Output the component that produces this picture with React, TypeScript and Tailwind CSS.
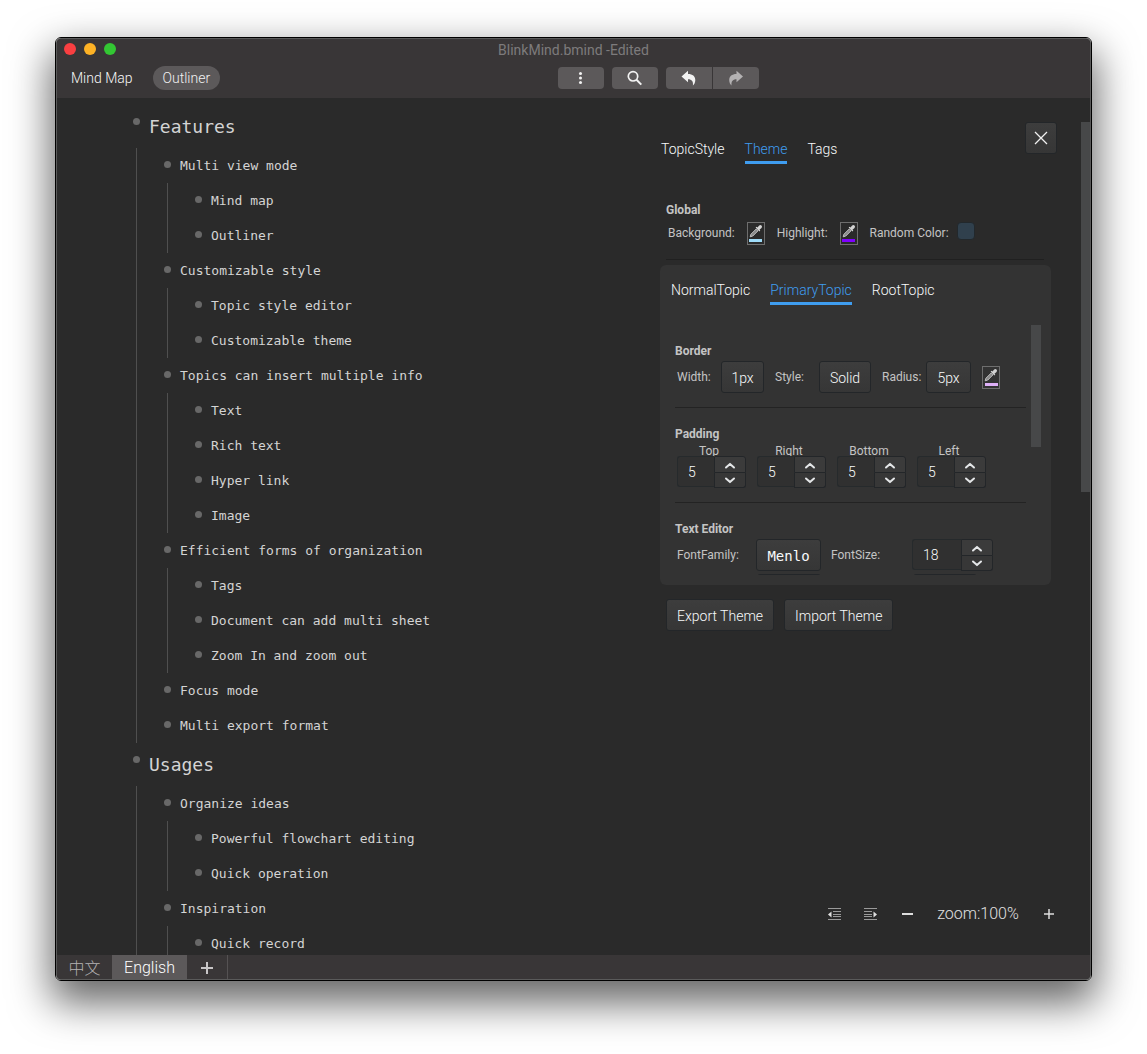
import { useId, type ReactNode } from "react";

type Topic = { text: string; children?: Topic[] };

const topics: Topic[] = [
  {
    text: "Features",
    children: [
      { text: "Multi view mode", children: [{ text: "Mind map" }, { text: "Outliner" }] },
      { text: "Customizable style", children: [{ text: "Topic style editor" }, { text: "Customizable theme" }] },
      {
        text: "Topics can insert multiple info",
        children: [{ text: "Text" }, { text: "Rich text" }, { text: "Hyper link" }, { text: "Image" }],
      },
      {
        text: "Efficient forms of organization",
        children: [{ text: "Tags" }, { text: "Document can add multi sheet" }, { text: "Zoom In and zoom out" }],
      },
      { text: "Focus mode" },
      { text: "Multi export format" },
    ],
  },
  {
    text: "Usages",
    children: [
      { text: "Organize ideas", children: [{ text: "Powerful flowchart editing" }, { text: "Quick operation" }] },
      { text: "Inspiration", children: [{ text: "Quick record" }] },
    ],
  },
];

function TopicList({ items, root = false }: { items: Topic[]; root?: boolean }) {
  return (
    <ul className={root ? "" : "ml-[3px] border-l border-[#4f4f4f] pl-[27px]"}>
      {items.map((t) => (
        <li key={t.text}>
          <div className={root ? "flex h-[43px] items-center gap-[9px] text-lg" : "flex h-[35px] items-center gap-[9px] text-[13px]"}>
            <span className={root ? "mb-2.5 size-[7px] shrink-0 rounded-full bg-[#686868]" : "mb-0.5 size-[7px] shrink-0 rounded-full bg-[#686868]"} />
            <span className="whitespace-nowrap">{t.text}</span>
          </div>
          {t.children && <TopicList items={t.children} />}
        </li>
      ))}
    </ul>
  );
}

function Tabs({ items, active }: { items: string[]; active: string }) {
  return (
    <div role="tablist" className="flex gap-5 text-sm font-light">
      {items.map((t) => (
        <button
          key={t}
          role="tab"
          aria-selected={t === active}
          className={
            t === active
              ? "h-[30px] border-b-3 border-[#3f9df0] pt-0.5 text-[#3f9df0]"
              : "h-[30px] border-b-3 border-transparent pt-0.5 text-[#f8fafb]"
          }
        >
          {t}
        </button>
      ))}
    </div>
  );
}

function ColorButton({ label, swatch }: { label: string; swatch: string }) {
  return (
    <button aria-label={label} className="flex h-[23px] w-[18px] shrink-0 flex-col items-center justify-between border border-[#6e6e6e] pt-px pb-0.5">
      <svg width="14" height="14" viewBox="0 0 14 14" fill="none">
        <path d="M1.2 12.8 2 10.2 7.2 5l1.8 1.8-5.2 5.2z" fill="#8a8a8a" stroke="#c0c0c0" strokeWidth="1" />
        <path d="M6.6 3.6 7.5 2.8l.9.8 1.8-2a1.6 1.6 0 0 1 2.3 2.3l-2 1.8.8.9-.9.9z" fill="#d4d4d4" />
      </svg>
      <span className={`h-[3px] w-[13px] ${swatch}`} />
    </button>
  );
}

const raised =
  "rounded-[3px] border border-[#232629] bg-linear-to-b from-[#3d3d3d] to-[#363636] text-[#f8fafb]";

function Picker({ label, value, size, mono = false }: { label: string; value: string; size: string; mono?: boolean }) {
  return (
    <select
      aria-label={label}
      defaultValue={value}
      className={`h-8 appearance-none pt-0.5 text-center [text-align-last:center] text-sm font-light ${raised} ${size} ${mono ? "font-['DejaVu_Sans_Mono',monospace]" : ""}`}
    >
      <option>{value}</option>
    </select>
  );
}

function Chevron({ up = false }: { up?: boolean }) {
  return (
    <svg width="12" height="8" viewBox="0 0 12 8" fill="none" stroke="#e4e6e8" strokeWidth="2" strokeLinecap="round" strokeLinejoin="round">
      <path d={up ? "M2 6.5 6 2.9 10 6.5" : "M2 2.500 6 6.1 10 2.500"} />
    </svg>
  );
}

function NumberBox({ id, value, size }: { id: string; value: number; size: string }) {
  return (
    <div className="flex">
      <input
        id={id}
        defaultValue={value}
        inputMode="numeric"
        className={`h-[31px] rounded-l-[3px] border border-r-0 border-[#262a2c] bg-[#303030] pl-2.5 text-sm font-light text-[#f8fafb] ${size}`}
      />
      <div className="flex w-8 flex-col">
        <button aria-label="Increase" className="flex h-[17px] items-center justify-center rounded-tr-[3px] border border-[#232629] bg-[#3b3b3b]">
          <Chevron up />
        </button>
        <button aria-label="Decrease" className="flex h-[15px] items-center justify-center rounded-br-[3px] border border-t-0 border-[#232629] bg-[#373737]">
          <Chevron />
        </button>
      </div>
    </div>
  );
}

function PaddingField({ label }: { label: string }) {
  const id = useId();
  return (
    <div className="flex w-[70px] flex-col">
      <label htmlFor={id} className="-mb-[3px] h-4 pr-1.5 text-center text-xs leading-4">
        {label}
      </label>
      <NumberBox id={id} value={5} size="w-[37px]" />
    </div>
  );
}

function Heading({ children }: { children: ReactNode }) {
  return <h3 className="text-xs leading-4 font-bold">{children}</h3>;
}

function ThemePanel() {
  const random = useId();
  const size = useId();
  return (
    <aside className="flex w-[397px] shrink-0 flex-col pt-6 text-xs font-normal text-[#c4c4c4]">
      <div className="flex items-start justify-between">
        <div className="pt-3 pl-px">
          <Tabs items={["TopicStyle", "Theme", "Tags"]} active="Theme" />
        </div>
        <button aria-label="Close" className={`flex size-8 items-center justify-center ${raised}`}>
          <svg width="14" height="14" viewBox="0 0 14 14" stroke="#f0f0f0" strokeWidth="1.3">
            <path d="M1 1 13 13M13 1 1 13" />
          </svg>
        </button>
      </div>

      <section className="mr-[13px] ml-1.5 border-b border-[#202020] pt-[38px] pb-3.5">
        <Heading>Global</Heading>
        <div className="mt-[3px] flex h-6 items-center gap-3 pl-0.5">
          <span>Background:</span>
          <ColorButton label="Background" swatch="bg-[#9fdcf9]" />
          <span>Highlight:</span>
          <ColorButton label="Highlight" swatch="bg-[#7f00ff]" />
          <label htmlFor={random}>Random Color:</label>
          <input id={random} type="checkbox" className="-ml-1 mb-1 size-[18px] appearance-none rounded-[4px] border border-[#22282c] bg-[#30404d]" />
        </div>
      </section>

      <div className="mt-[5px] mr-1.5 rounded-md bg-[#333333] pt-2.5 pr-2.5 pb-2.5 pl-[11px]">
        <Tabs items={["NormalTopic", "PrimaryTopic", "RootTopic"]} active="PrimaryTopic" />
        <div className="mt-5 flex h-[250px] gap-[5px] overflow-hidden pl-1">
          <div className="min-w-0 flex-1">
            <section className="border-b border-[#232323] pt-[18px] pb-3.5">
              <Heading>Border</Heading>
              <div className="mt-0.5 flex h-8 items-center pl-0.5">
                <span className="w-11">Width:</span>
                <Picker label="Width" value="1px" size="w-[43px]" />
                <span className="ml-[11px] w-11">Style:</span>
                <Picker label="Style" value="Solid" size="w-[52px]" />
                <span className="ml-[11px] w-11">Radius:</span>
                <Picker label="Radius" value="5px" size="w-[45px]" />
                <span className="ml-[11px] flex">
                  <ColorButton label="Border color" swatch="bg-[#deb0f7]" />
                </span>
              </div>
            </section>
            <section className="border-b border-[#232323] pt-[18px] pb-3.5">
              <Heading>Padding</Heading>
              <div className="mt-px flex gap-2.5 pl-0.5">
                <PaddingField label="Top" />
                <PaddingField label="Right" />
                <PaddingField label="Bottom" />
                <PaddingField label="Left" />
              </div>
            </section>
            <section className="pt-[18px]">
              <Heading>Text Editor</Heading>
              <div className="mt-0.5 flex h-8 items-center pl-0.5">
                <span className="w-[79px]">FontFamily:</span>
                <Picker label="FontFamily" value="Menlo" size="w-[65px]" mono />
                <label htmlFor={size} className="ml-2.5 w-[81px]">
                  FontSize:
                </label>
                <NumberBox id={size} value={18} size="w-[49px]" />
              </div>
              <div className="mt-[3px] flex h-8 gap-[92px] pl-[82px]">
                <button aria-label="Font weight" className={`w-[64px] ${raised}`} />
                <button aria-label="Line height" className={`w-[64px] ${raised}`} />
              </div>
            </section>
          </div>
          <div className="h-[122px] w-2.5 bg-[#474849]" />
        </div>
      </div>

      <div className="mt-3.5 flex gap-2.5 pl-1.5 text-sm font-light">
        <button className={`h-8 px-2.5 pt-0.5 ${raised}`}>Export Theme</button>
        <button className={`h-8 px-2.5 pt-0.5 ${raised}`}>Import Theme</button>
      </div>

      <div className="mt-auto mb-[29px] flex h-6 items-center justify-end gap-5 text-base font-light text-[#e0e0e0]">
        <button aria-label="Collapse all">
          <svg width="16" height="16" viewBox="0 0 16 16" stroke="#9a9a9a">
            <path d="M1 2.5h13M6 5.5h8M6 8.5h8M6 10.5h8M1 13.5h13" />
            <path d="M4.500 5.500v6L1 8.500z" fill="#e0e0e0" stroke="none" />
          </svg>
        </button>
        <button aria-label="Expand all">
          <svg width="16" height="16" viewBox="0 0 16 16" stroke="#9a9a9a">
            <path d="M1 2.500h13M1 5.500h8M1 8.500h8M1 10.500h8M1 13.500h13" />
            <path d="M10.500 5.500v6l3.500-3z" fill="#e0e0e0" stroke="none" />
          </svg>
        </button>
        <button aria-label="Zoom out">
          <svg width="16" height="16" viewBox="0 0 16 16" stroke="#dddddd" strokeWidth="2">
            <path d="M3 8h11" />
          </svg>
        </button>
        <span className="w-[86px] text-center">zoom:100%</span>
        <button aria-label="Zoom in">
          <svg width="16" height="16" viewBox="0 0 16 16" stroke="#dddddd" strokeWidth="1.500">
            <path d="M3 8h10M8 3v10" />
          </svg>
        </button>
      </div>
    </aside>
  );
}

const tool = "flex h-[22px] w-[46px] items-center justify-center bg-[#5c595a]";

export default function App() {
  return (
    <div className="h-screen bg-white px-[55px] pt-[37px] pb-[73px] font-['Roboto',sans-serif] font-light text-[#c8c8c8]">
      <div className="h-full rounded-md border border-black shadow-[0_18px_40px_4px_rgba(0,0,0,0.6)]">
        <div className="flex h-full flex-col overflow-hidden rounded-[5px] border border-[#5a5a5a] bg-[#2a2a2a]">
          <header className="h-[59px] shrink-0 bg-[#393637]">
            <div className="relative flex h-6 items-start gap-2 pt-1 pl-[7px]">
              <button aria-label="Close window" className="size-3 rounded-full bg-[#f93f41]" />
              <button aria-label="Minimize window" className="size-3 rounded-full bg-[#fdb225]" />
              <button aria-label="Maximize window" className="size-3 rounded-full bg-[#33c733]" />
              <h1 className="absolute inset-x-0 top-px text-center text-sm font-normal text-[#7d7b7c]">BlinkMind.bmind -Edited</h1>
            </div>
            <div className="flex h-[30px] items-center">
              <nav className="flex gap-2.5 pl-1 text-sm">
                <button className="h-6 rounded-full px-2.5 text-[#f8f8f8]">Mind Map</button>
                <button className="h-6 rounded-full bg-[#5c595a] px-2.5 text-[#f2f2f2]">Outliner</button>
              </nav>
              <div className="flex flex-1 items-center justify-center gap-2 pl-1.5">
                <button aria-label="More" className={`${tool} rounded-[4px]`}>
                  <svg width="16" height="16" viewBox="0 0 16 16" fill="#f2f2f2">
                    <circle cx="7.500" cy="3.500" r="1.500" />
                    <circle cx="7.500" cy="8" r="1.500" />
                    <circle cx="7.500" cy="12.500" r="1.500" />
                  </svg>
                </button>
                <button aria-label="Search" className={`${tool} rounded-[4px]`}>
                  <svg width="16" height="16" viewBox="0 0 16 16" fill="none" stroke="#f2f2f2" strokeWidth="1.700">
                    <circle cx="6" cy="6.300" r="4.700" />
                    <path d="m9.500 9.800 4.800 4.800" strokeWidth="2" />
                  </svg>
                </button>
                <div className="flex gap-px">
                  <button aria-label="Undo" className={`${tool} rounded-l-[4px]`}>
                    <svg width="16" height="16" viewBox="0 0 16 16" fill="#f2f2f2">
                      <path d="M.500 6.500 7 .800v3.300c4.600 0 7.300 2.200 7.300 6 0 2.200-.900 4.300-2.400 5.500.600-4-1-6.300-4.900-6.300v3z" />
                    </svg>
                  </button>
                  <button aria-label="Redo" className={`${tool} rounded-r-[4px]`}>
                    <svg width="16" height="16" viewBox="0 0 16 16" fill="#b4b2b3">
                      <path d="M15 6.500 8.500.800v3.300c-4.600 0-7.300 2.200-7.300 6 0 2.200.900 4.300 2.400 5.500-.600-4 1-6.300 4.900-6.300v3z" />
                    </svg>
                  </button>
                </div>
              </div>
            </div>
          </header>

          <main className="flex min-h-0 flex-1">
            <div className="min-w-0 flex-1 overflow-hidden pt-[7px] pl-[76px] font-['DejaVu_Sans_Mono',monospace] font-normal text-[#d4d4d4]">
              <TopicList items={topics} root />
            </div>
            <ThemePanel />
            <div className="mt-6 ml-6 h-[370px] w-[9px] bg-[#474849]" />
          </main>

          <footer className="flex h-6 shrink-0 bg-[#393637] text-base">
            <button className="w-[55px] font-['Noto_Sans_CJK_SC',sans-serif] leading-6 text-[#b4b2b3]">中文</button>
            <button className="w-[75px] bg-[#5c595a] pt-0.5 leading-[22px] text-white">English</button>
            <button aria-label="Add sheet" className="flex w-[41px] items-center justify-center border-r border-[#555253] pt-0.5">
              <svg width="14" height="14" viewBox="0 0 14 14" stroke="#c8c6c7" strokeWidth="2">
                <path d="M1 7h12M7 1v12" />
              </svg>
            </button>
          </footer>
        </div>
      </div>
    </div>
  );
}
